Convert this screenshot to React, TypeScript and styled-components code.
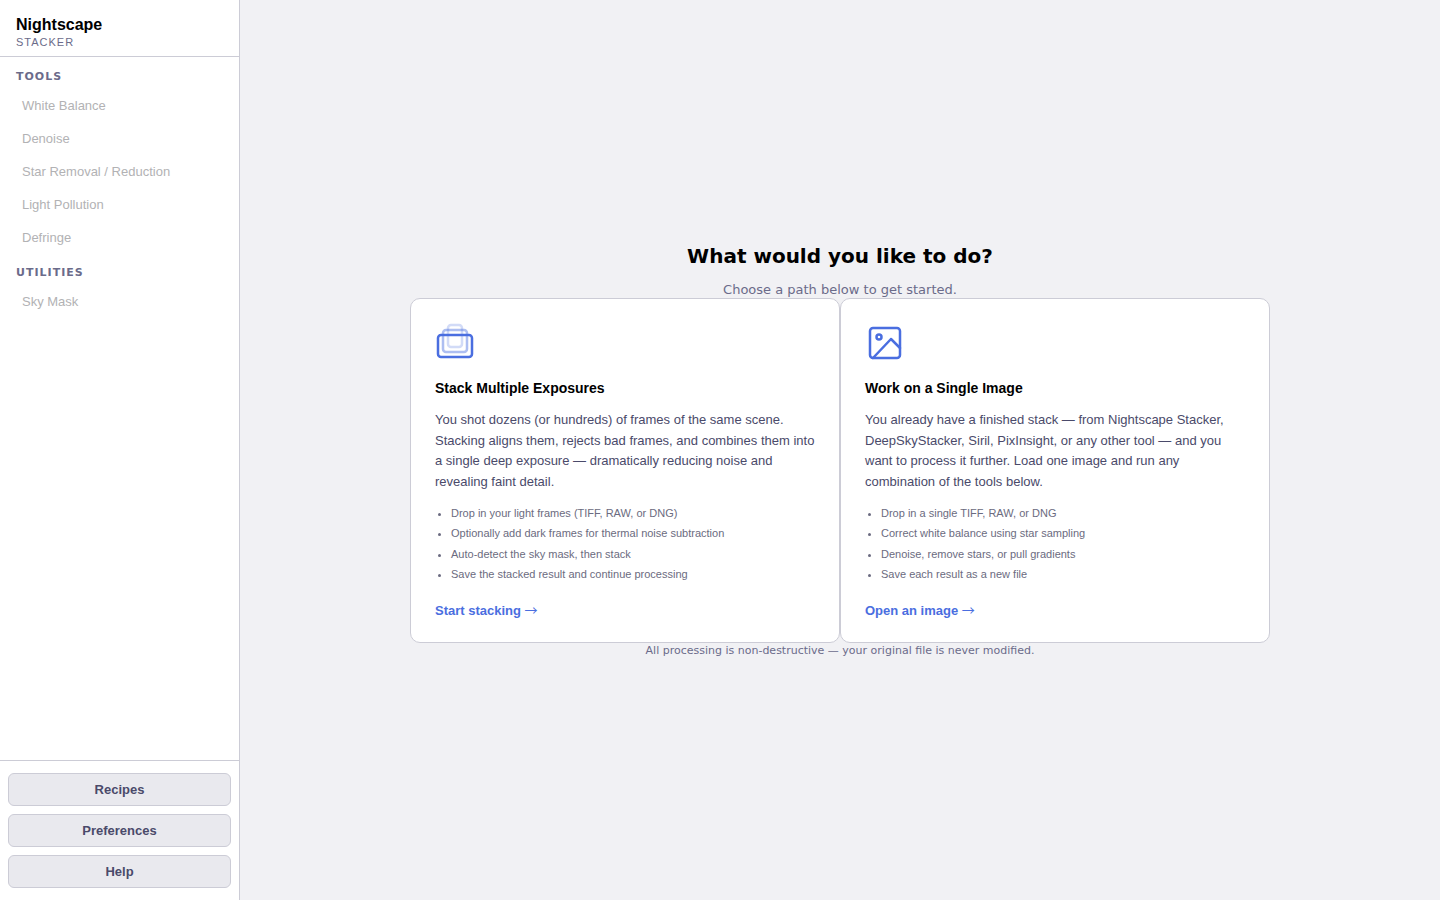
import React from "react";
import styled, { createGlobalStyle } from "styled-components";

const sans = `"Liberation Sans", Arial, sans-serif`;
const display = `"DejaVu Sans", sans-serif`;

const GlobalStyle = createGlobalStyle`
  *, *::before, *::after { box-sizing: border-box; }
  body { margin: 0; background: #f1f1f4; color: #000; font-family: ${sans}; font-size: 13px; }
  button { font-family: inherit; }
`;

const Shell = styled.div`
  display: flex;
  min-height: 100vh;
`;

const Sidebar = styled.aside`
  display: flex;
  flex-direction: column;
  flex: 0 0 240px;
  background: #fff;
  border-right: 1px solid #ccccd6;
`;

const Brand = styled.header`
  padding: 14px 16px 7px;
  border-bottom: 1px solid #ccccd6;
`;

const BrandName = styled.div`
  font-size: 16px;
  line-height: 21px;
  font-weight: 700;
`;

const BrandSub = styled.div`
  font-size: 11px;
  line-height: 14px;
  letter-spacing: 1px;
  color: #6b6b8a;
`;

const Nav = styled.nav`
  flex: 1;
  padding: 8px;
`;

const NavHeading = styled.h2`
  margin: 0;
  padding: 4px 8px;
  font-family: ${display};
  font-size: 11px;
  line-height: 15px;
  font-weight: 700;
  letter-spacing: 1px;
  color: #6b6b8a;
`;

const NavList = styled.ul`
  display: flex;
  flex-direction: column;
  gap: 2px;
  margin: 2px 0 8px;
  padding: 0;
  list-style: none;
`;

const NavItem = styled.button`
  display: block;
  width: 100%;
  padding: 8px 14px;
  border: 0;
  background: none;
  text-align: left;
  font-size: 13px;
  line-height: 15px;
  color: #b2b2b4;
`;

const SidebarFooter = styled.footer`
  display: flex;
  flex-direction: column;
  gap: 8px;
  padding: 12px 8px;
  border-top: 1px solid #ccccd6;
`;

const FooterButton = styled.button`
  padding: 8px 12px;
  border: 1px solid #ccccd6;
  border-radius: 6px;
  background: #e9e9ee;
  color: #4a4a6a;
  font-size: 13px;
  line-height: 15px;
  font-weight: 700;
  cursor: pointer;
`;

const Main = styled.main`
  flex: 1;
  display: flex;
  flex-direction: column;
  align-items: center;
  justify-content: center;
  padding: 32px;
`;

const Title = styled.h1`
  margin: 0 0 10px;
  font-family: ${display};
  font-size: 20px;
  line-height: 30px;
  font-weight: 700;
`;

const Subtitle = styled.p`
  margin: 0;
  font-family: ${display};
  font-size: 13px;
  line-height: 17px;
  color: #6b6b8a;
`;

const Cards = styled.div`
  display: grid;
  grid-template-columns: 1fr 1fr;
  width: 100%;
  max-width: 860px;
`;

const Card = styled.button`
  display: flex;
  flex-direction: column;
  align-items: flex-start;
  padding: 24px;
  border: 1px solid #ccccd6;
  border-radius: 10px;
  background: #fff;
  color: #000;
  text-align: left;
  cursor: pointer;
`;

const CardIcon = styled.svg`
  width: 40px;
  height: 40px;
  margin-bottom: 15px;
  fill: none;
  stroke: #4a6ee0;
`;

const CardTitle = styled.span`
  margin-bottom: 11px;
  font-size: 14px;
  line-height: 21px;
  font-weight: 700;
`;

const CardText = styled.span`
  font-size: 13px;
  line-height: 1.6;
  color: #4a4a6a;
`;

const Steps = styled.ul`
  margin: 10px 0 19px;
  padding: 0 0 0 16px;
  font-size: 11px;
  line-height: 1.85;
  color: #6b6b80;
`;

const CardAction = styled.span`
  font-size: 13px;
  line-height: 15px;
  font-weight: 700;
  color: #4a6ee0;
`;

const Arrow = styled.span`
  font-family: "Noto Sans CJK JP", sans-serif;
  font-weight: 400;
  line-height: 0;
`;

const Note = styled.p`
  margin: 0;
  font-family: ${display};
  font-size: 11px;
  line-height: 16px;
  color: #6b6b8a;
`;

const tools = ["White Balance", "Denoise", "Star Removal / Reduction", "Light Pollution", "Defringe"];
const utilities = ["Sky Mask"];

function NavGroup({ title, items }: { title: string; items: string[] }) {
  return (
    <section>
      <NavHeading>{title}</NavHeading>
      <NavList>
        {items.map((item) => (
          <li key={item}>
            <NavItem disabled>{item}</NavItem>
          </li>
        ))}
      </NavList>
    </section>
  );
}

function StackIcon() {
  return (
    <CardIcon viewBox="0 0 40 40" strokeWidth="2.5" aria-hidden="true">
      <rect x="3" y="12" width="34" height="22" rx="3" />
      <rect x="8" y="7" width="24" height="22" rx="3" opacity="0.45" />
      <rect x="13" y="2" width="14" height="22" rx="3" opacity="0.25" />
    </CardIcon>
  );
}

function ImageIcon() {
  return (
    <CardIcon viewBox="0 0 40 40" strokeWidth="2.5" strokeLinecap="round" strokeLinejoin="round" aria-hidden="true">
      <rect x="5" y="5" width="30" height="30" rx="3" />
      <circle cx="14" cy="14" r="2.5" />
      <path d="M35 25L26 16L8 35" />
    </CardIcon>
  );
}

interface PathCardProps {
  icon: React.ReactNode;
  title: string;
  text: string;
  steps: string[];
  action: string;
}

function PathCard({ icon, title, text, steps, action }: PathCardProps) {
  return (
    <Card>
      {icon}
      <CardTitle>{title}</CardTitle>
      <CardText>{text}</CardText>
      <Steps>
        {steps.map((step) => (
          <li key={step}>{step}</li>
        ))}
      </Steps>
      <CardAction>
        {action} <Arrow>→</Arrow>
      </CardAction>
    </Card>
  );
}

export default function App() {
  return (
    <>
      <GlobalStyle />
      <Shell>
        <Sidebar>
          <Brand>
            <BrandName>Nightscape</BrandName>
            <BrandSub>STACKER</BrandSub>
          </Brand>
          <Nav>
            <NavGroup title="TOOLS" items={tools} />
            <NavGroup title="UTILITIES" items={utilities} />
          </Nav>
          <SidebarFooter>
            <FooterButton>Recipes</FooterButton>
            <FooterButton>Preferences</FooterButton>
            <FooterButton>Help</FooterButton>
          </SidebarFooter>
        </Sidebar>
        <Main>
          <Title>What would you like to do?</Title>
          <Subtitle>Choose a path below to get started.</Subtitle>
          <Cards>
            <PathCard
              icon={<StackIcon />}
              title="Stack Multiple Exposures"
              text="You shot dozens (or hundreds) of frames of the same scene. Stacking aligns them, rejects bad frames, and combines them into a single deep exposure — dramatically reducing noise and revealing faint detail."
              steps={[
                "Drop in your light frames (TIFF, RAW, or DNG)",
                "Optionally add dark frames for thermal noise subtraction",
                "Auto-detect the sky mask, then stack",
                "Save the stacked result and continue processing",
              ]}
              action="Start stacking"
            />
            <PathCard
              icon={<ImageIcon />}
              title="Work on a Single Image"
              text="You already have a finished stack — from Nightscape Stacker, DeepSkyStacker, Siril, PixInsight, or any other tool — and you want to process it further. Load one image and run any combination of the tools below."
              steps={[
                "Drop in a single TIFF, RAW, or DNG",
                "Correct white balance using star sampling",
                "Denoise, remove stars, or pull gradients",
                "Save each result as a new file",
              ]}
              action="Open an image"
            />
          </Cards>
          <Note>All processing is non-destructive — your original file is never modified.</Note>
        </Main>
      </Shell>
    </>
  );
}
